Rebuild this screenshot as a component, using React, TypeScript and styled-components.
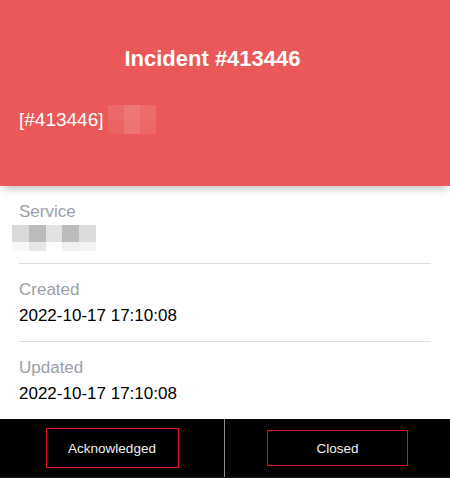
import React from 'react'
import styled, { createGlobalStyle } from 'styled-components'

const GlobalStyle = createGlobalStyle`
  html, body {
    margin: 0;
    padding: 0;
    background: #ffffff;
  }
  body {
    font-family: "Liberation Sans", Arial, Helvetica, sans-serif;
  }
`

// redacted cells (pixelated in the screenshot)
const titleCells = ['#ec6969', '#ee7676', '#ec6b6b', '#eb6262', '#ee7373', '#ec6868']
const serviceCells = [
  '#dadada', '#bbbbbb', '#e2e2e2', '#bcbcbc', '#dcdcdc',
  '#f8f8f8', '#e6e6e6', '#ffffff', '#f0f0f0', '#f3f3f3',
]

const rows = [
  { label: 'Created', value: '2022-10-17 17:10:08' },
  { label: 'Updated', value: '2022-10-17 17:10:08' },
]

const App: React.FC = () => {
  return (
    <Page>
      <GlobalStyle />
      <Header>
        <Title>Incident #413446</Title>
        <Summary>
          [#413446]
          <Mosaic $cols={3} $cell="16px 14.5px">
            {titleCells.map((c, i) => (
              <Cell key={i} $color={c} />
            ))}
          </Mosaic>
        </Summary>
      </Header>

      <Details>
        <Row>
          <Label>Service</Label>
          <Value>
            <ServiceMosaic $cols={5} $cell="16.8px 13px">
              {serviceCells.map((c, i) => (
                <Cell key={i} $color={c} />
              ))}
            </ServiceMosaic>
          </Value>
        </Row>
        {rows.map((r, i) => (
          <Row key={r.label} $last={i === rows.length - 1}>
            <Label>{r.label}</Label>
            <Value>{r.value}</Value>
          </Row>
        ))}
      </Details>

      <Footer>
        <Half>
          <ActionButton $w={133} $h={40}>Acknowledged</ActionButton>
        </Half>
        <Half>
          <ActionButton $w={141} $h={36}>Closed</ActionButton>
        </Half>
      </Footer>
    </Page>
  )
}

const Page = styled.div`
  width: 450px;
  height: 478px;
  display: flex;
  flex-direction: column;
  overflow: hidden;
`

const Header = styled.header`
  position: relative;
  z-index: 1;
  background: #ea5859;
  padding: 45px 0 52px 19px;
  display: flex;
  flex-direction: column;
  gap: 32px;
  box-shadow: 0 5px 9px -3px rgba(0, 0, 0, 0.28);
`

const Title = styled.h1`
  margin: 0;
  padding-right: 44px;
  text-align: center;
  color: #ffffff;
  font-size: 22px;
  font-weight: 700;
  line-height: 28px;
`

const Summary = styled.div`
  display: flex;
  align-items: center;
  color: #ffffff;
  font-size: 19px;
  line-height: 29px;
`

const Mosaic = styled.div<{ $cols: number; $cell: string }>`
  display: grid;
  grid-template-columns: repeat(${p => p.$cols}, ${p => p.$cell.split(' ')[0]});
  grid-auto-rows: ${p => p.$cell.split(' ')[1]};
  margin-left: 4px;
`

const ServiceMosaic = styled(Mosaic)`
  margin: 0 0 0 -7px;
  grid-template-rows: 17px 9px;
  grid-auto-rows: auto;
`

const Cell = styled.span<{ $color: string }>`
  display: block;
  background: ${p => p.$color};
`

const Details = styled.main`
  flex: 1;
  padding: 0 19px;
`

const Row = styled.section<{ $last?: boolean }>`
  padding: 15px 0 14px;
  border-bottom: ${p => (p.$last ? 'none' : '1px solid #dcdce2')};
`

const Label = styled.div`
  color: #9ba0a9;
  font-size: 17px;
  line-height: 22px;
`

const Value = styled.div`
  margin-top: 4px;
  height: 22px;
  display: flex;
  align-items: center;
  color: #000000;
  font-size: 17px;
  line-height: 22px;
`

const Footer = styled.footer`
  height: 58px;
  background: #000000;
  border-bottom: 1px solid #1a1a1a;
  display: grid;
  grid-template-columns: 224px 1fr;
`

const Half = styled.div`
  display: flex;
  align-items: center;
  justify-content: center;
  & + & {
    border-left: 1px solid #8a8a8a;
  }
`

const ActionButton = styled.button<{ $w: number; $h: number }>`
  width: ${p => p.$w}px;
  height: ${p => p.$h}px;
  background: transparent;
  border: 1px solid #e3131c;
  color: #f0f0f0;
  font-family: "Liberation Sans", Arial, sans-serif;
  font-size: 13.5px;
  padding: 0;
  cursor: pointer;
`

export default App
